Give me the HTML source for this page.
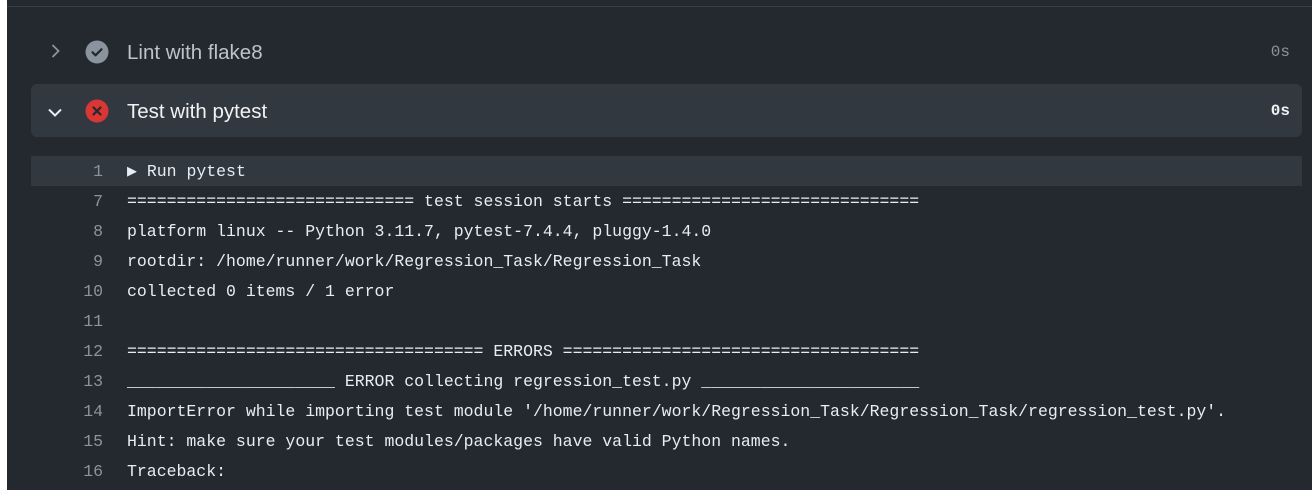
<!DOCTYPE html>
<html><head><meta charset="utf-8"><style>
html,body{margin:0;padding:0;}
body{width:1312px;height:490px;background:#fff;position:relative;overflow:hidden;font-family:"Liberation Sans",sans-serif;}
.main{position:absolute;left:7px;top:0;right:0;bottom:0;background:#24292f;}
.topline{position:absolute;left:7px;right:0;top:6px;height:1px;background:#3a4048;}
.row{position:absolute;left:31px;width:1271px;height:53px;border-radius:6px;}
.row .chev{position:absolute;left:15px;top:17px;}
.row .ic{position:absolute;left:54px;top:15px;}
.row .t{position:absolute;left:96px;top:16px;font-size:20.5px;}
.row .d{position:absolute;right:12px;top:18px;font-family:"Liberation Mono",monospace;font-size:16px;}
.log{position:absolute;left:31px;width:1271px;top:156px;}
.ln{height:30px;line-height:32px;font-family:"Liberation Mono",monospace;font-size:16.5px;color:#e6edf3;white-space:pre;position:relative;}
.ln .n{position:absolute;left:0;width:72px;text-align:right;color:#8b949e;}
.ln .c{position:absolute;left:96px;}
</style></head><body>
<div class="main"></div>
<div class="topline"></div>
<div class="row" style="top:25px;">
 <svg class="chev" width="18" height="18" viewBox="0 0 18 18"><path d="M6.5 3l6 6-6 6" stroke="#8b949e" stroke-width="1.8" fill="none"/></svg>
 <svg class="ic" width="24" height="24" viewBox="0 0 24 24"><circle cx="12" cy="12" r="11.5" fill="#8b949e"/><path d="M7.5 12.3l3 3 6-6" stroke="#24292f" stroke-width="2.2" fill="none" stroke-linecap="round" stroke-linejoin="round"/></svg>
 <div class="t" style="color:#bcc3cc;">Lint with flake8</div>
 <div class="d" style="color:#8b949e;">0s</div>
</div>
<div class="row" style="top:84px;background:#32383f;">
 <svg class="chev" width="18" height="18" viewBox="0 0 18 18" style="top:19px"><path d="M3 6.5l6 6 6-6" stroke="#e6edf3" stroke-width="2" fill="none"/></svg>
 <svg class="ic" width="24" height="24" viewBox="0 0 24 24"><circle cx="12" cy="12" r="11.5" fill="#da3633"/><path d="M8.5 8.5l7 7M15.5 8.5l-7 7" stroke="#24292f" stroke-width="2.2" stroke-linecap="round"/></svg>
 <div class="t" style="color:#f0f3f6;">Test with pytest</div>
 <div class="d" style="color:#f0f3f6;font-weight:bold;">0s</div>
</div>
<div class="log">
<div class="ln" style="background:#32383f;"><span class="n">1</span><span class="c">▶ Run pytest</span></div>
<div class="ln"><span class="n">7</span><span class="c">============================= test session starts ==============================</span></div>
<div class="ln"><span class="n">8</span><span class="c">platform linux -- Python 3.11.7, pytest-7.4.4, pluggy-1.4.0</span></div>
<div class="ln"><span class="n">9</span><span class="c">rootdir: /home/runner/work/Regression_Task/Regression_Task</span></div>
<div class="ln"><span class="n">10</span><span class="c">collected 0 items / 1 error</span></div>
<div class="ln"><span class="n">11</span><span class="c"></span></div>
<div class="ln"><span class="n">12</span><span class="c">==================================== ERRORS ====================================</span></div>
<div class="ln"><span class="n">13</span><span class="c">_____________________ ERROR collecting regression_test.py ______________________</span></div>
<div class="ln"><span class="n">14</span><span class="c">ImportError while importing test module '/home/runner/work/Regression_Task/Regression_Task/regression_test.py'.</span></div>
<div class="ln"><span class="n">15</span><span class="c">Hint: make sure your test modules/packages have valid Python names.</span></div>
<div class="ln"><span class="n">16</span><span class="c">Traceback:</span></div>
</div>
</body></html>
